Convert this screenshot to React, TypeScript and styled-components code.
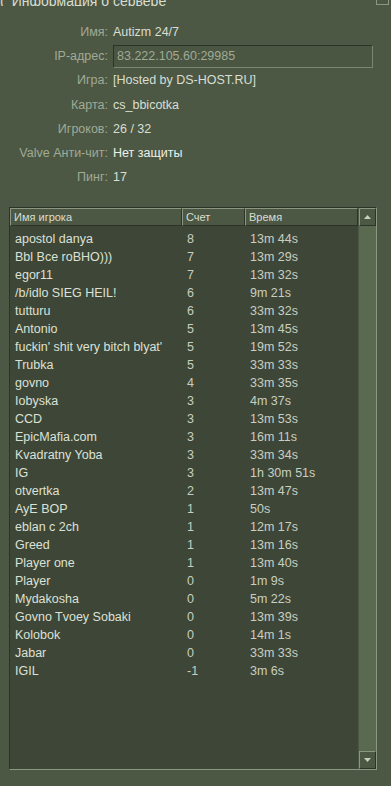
import styled, { createGlobalStyle } from "styled-components";

const GlobalStyle = createGlobalStyle`
  html, body {
    margin: 0;
    padding: 0;
    background: #4c5844;
    overflow: hidden;
  }
  * {
    box-sizing: border-box;
  }
`;

type Player = { name: string; score: number; time: string };

const players: Player[] = [
  { name: "apostol danya", score: 8, time: "13m 44s" },
  { name: "Bbl Bce roBHO)))", score: 7, time: "13m 29s" },
  { name: "egor11", score: 7, time: "13m 32s" },
  { name: "/b/idlo SIEG HEIL!", score: 6, time: "9m 21s" },
  { name: "tutturu", score: 6, time: "33m 32s" },
  { name: "Antonio", score: 5, time: "13m 45s" },
  { name: "fuckin' shit very bitch blyat'", score: 5, time: "19m 52s" },
  { name: "Trubka", score: 5, time: "33m 33s" },
  { name: "govno", score: 4, time: "33m 35s" },
  { name: "Iobyska", score: 3, time: "4m 37s" },
  { name: "CCD", score: 3, time: "13m 53s" },
  { name: "EpicMafia.com", score: 3, time: "16m 11s" },
  { name: "Kvadratny Yoba", score: 3, time: "33m 34s" },
  { name: "IG", score: 3, time: "1h 30m 51s" },
  { name: "otvertka", score: 2, time: "13m 47s" },
  { name: "AyE BOP", score: 1, time: "50s" },
  { name: "eblan c 2ch", score: 1, time: "12m 17s" },
  { name: "Greed", score: 1, time: "13m 16s" },
  { name: "Player one", score: 1, time: "13m 40s" },
  { name: "Player", score: 0, time: "1m 9s" },
  { name: "Mydakosha", score: 0, time: "5m 22s" },
  { name: "Govno Tvoey Sobaki", score: 0, time: "13m 39s" },
  { name: "Kolobok", score: 0, time: "14m 1s" },
  { name: "Jabar", score: 0, time: "33m 33s" },
  { name: "IGIL", score: -1, time: "3m 6s" },
];

const info: { label: string; value: string; field?: boolean; bright?: boolean }[] = [
  { label: "Имя", value: "Autizm 24/7" },
  { label: "IP-адрес", value: "83.222.105.60:29985", field: true },
  { label: "Игра", value: "[Hosted by DS-HOST.RU]" },
  { label: "Карта", value: "cs_bbicotka" },
  { label: "Игроков", value: "26 / 32" },
  { label: "Valve Анти-чит", value: "Нет защиты", bright: true },
  { label: "Пинг", value: "17" },
];

const Window = styled.div`
  width: 391px;
  height: 786px;
  background: #4c5844;
  font-family: "Liberation Sans", Arial, sans-serif;
  font-size: 12.5px;
  color: #d8ded3;
  display: flex;
  flex-direction: column;
`;

const TitleBar = styled.div`
  height: 6px;
  overflow: hidden;
  display: flex;
  align-items: flex-end;
  justify-content: space-between;
`;

const Title = styled.div`
  font-size: 14px;
  line-height: 14px;
  margin-bottom: -2px;
  color: #d8ded3;
  white-space: nowrap;
  span {
    margin-right: 7px;
  }
`;

const CloseBox = styled.div`
  width: 13px;
  height: 8px;
  border: 1px solid #8c9680;
  margin-right: 2px;
  margin-bottom: 1px;
`;

const InfoGrid = styled.div`
  display: grid;
  grid-template-columns: 108px 1fr;
  grid-auto-rows: 24.2px;
  column-gap: 5px;
  padding: 14px 18px 0 0;
  align-items: center;
`;

const Label = styled.div`
  text-align: right;
  color: #a0aa95;
  white-space: nowrap;
`;

const Value = styled.div<{ $bright?: boolean }>`
  color: ${(p) => (p.$bright ? "#eef0ea" : "#d8ded3")};
  white-space: nowrap;
`;

const Field = styled.div`
  height: 23px;
  border: 1px solid #7c8570;
  border-top-color: #2c3327;
  border-left-color: #2c3327;
  background: #4a5542;
  color: #a0aa95;
  display: flex;
  align-items: center;
  padding-left: 3px;
`;

const ListBox = styled.div`
  margin: 18px 14px 0 9px;
  height: 563px;
  border: 1px solid #8c9680;
  border-top-color: #2c3327;
  border-left-color: #2c3327;
  background: #3e4637;
  display: grid;
  grid-template-columns: 1fr 18px;
`;

const ListMain = styled.div`
  display: flex;
  flex-direction: column;
  min-width: 0;
`;

const HeaderRow = styled.div`
  display: grid;
  grid-template-columns: 172px 63px 1fr;
  height: 18px;
`;

const HeaderCell = styled.div`
  background: #4c5844;
  border: 1px solid #2c3327;
  border-top-color: #8c9680;
  border-left-color: #8c9680;
  padding-left: 3px;
  display: flex;
  align-items: center;
  font-size: 11px;
  color: #d8ded3;
  white-space: nowrap;
`;

const Rows = styled.div`
  padding-top: 4px;
`;

const Row = styled.div`
  display: grid;
  grid-template-columns: 172px 63px 1fr;
  height: 18px;
  align-items: center;
`;

const Cell = styled.div<{ $dim?: boolean }>`
  padding-left: 5px;
  white-space: nowrap;
  color: ${(p) => (p.$dim ? "#c8cec0" : "#dce1d6")};
`;

const ScrollBar = styled.div`
  background: #5a6a50;
  display: flex;
  flex-direction: column;
  justify-content: space-between;
  border-left: 1px solid #4c5844;
`;

const ScrollButton = styled.div`
  height: 18px;
  background: #4c5844;
  border: 1px solid #2c3327;
  border-top-color: #8c9680;
  border-left-color: #8c9680;
  display: flex;
  align-items: center;
  justify-content: center;
`;

const Arrow = ({ down }: { down?: boolean }) => (
  <svg width="7" height="4" viewBox="0 0 7 4">
    <polygon
      points={down ? "0,0 7,0 3.5,4" : "0,4 7,4 3.5,0"}
      fill="#c8cec0"
    />
  </svg>
);

export default function App() {
  return (
    <Window>
      <GlobalStyle />
      <TitleBar>
        <Title>
          <span>(</span>Информация о сервере
        </Title>
        <CloseBox />
      </TitleBar>
      <InfoGrid>
        {info.map((r) => (
          <>
            <Label key={r.label + "l"}>{r.label}:</Label>
            {r.field ? (
              <Field key={r.label + "v"}>{r.value}</Field>
            ) : (
              <Value key={r.label + "v"} $bright={r.bright}>
                {r.value}
              </Value>
            )}
          </>
        ))}
      </InfoGrid>
      <ListBox>
        <ListMain>
          <HeaderRow>
            <HeaderCell>Имя игрока</HeaderCell>
            <HeaderCell>Счет</HeaderCell>
            <HeaderCell>Время</HeaderCell>
          </HeaderRow>
          <Rows>
            {players.map((p, i) => (
              <Row key={i}>
                <Cell>{p.name}</Cell>
                <Cell $dim>{p.score}</Cell>
                <Cell $dim>{p.time}</Cell>
              </Row>
            ))}
          </Rows>
        </ListMain>
        <ScrollBar>
          <ScrollButton>
            <Arrow />
          </ScrollButton>
          <ScrollButton>
            <Arrow down />
          </ScrollButton>
        </ScrollBar>
      </ListBox>
    </Window>
  );
}
